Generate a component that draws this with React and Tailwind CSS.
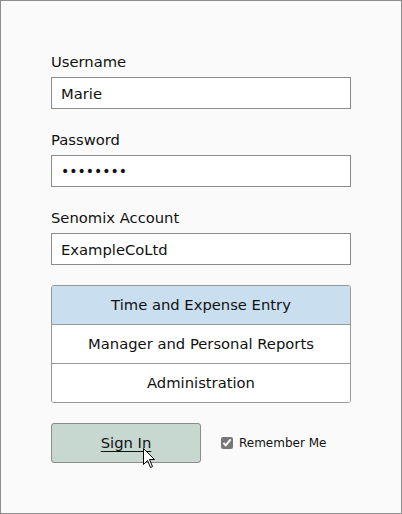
const font = { fontFamily: '"DejaVu Sans", Verdana, sans-serif' };

const Field = ({ label, children }) => (
  <div className="flex flex-col">
    <label className="text-[14.75px] leading-[20px] text-[#111] h-[20px] mb-[5px]">{label}</label>
    {children}
  </div>
);

const inputCls =
  "w-[300px] h-[32px] border border-[#8c8c8c] bg-white px-[9px] text-[14.75px] text-[#111] outline-none";

export default function App() {
  return (
    <div
      style={font}
      className="w-[402px] h-[514px] border border-[#8e8e8e] bg-[#fafafa] pl-[50px] pt-[51px] flex flex-col"
    >
      <div className="flex flex-col gap-[21px]">
        <Field label="Username">
          <input className={inputCls} defaultValue="Marie" readOnly />
        </Field>
        <Field label="Password">
          <input type="password" className={inputCls + " text-[14px]"} defaultValue="password" readOnly />
        </Field>
        <Field label="Senomix Account">
          <input className={inputCls} defaultValue="ExampleCoLtd" readOnly />
        </Field>
      </div>

      <div className="mt-[20px] w-[300px] border border-[#999] rounded-[3px] overflow-hidden flex flex-col text-[14.75px] text-[#111]">
        <div className="h-[39px] flex items-center justify-center bg-[#c9dff0] border-b border-[#999]">
          Time and Expense Entry
        </div>
        <div className="h-[39px] flex items-center justify-center bg-white border-b border-[#999]">
          Manager and Personal Reports
        </div>
        <div className="h-[38px] flex items-center justify-center bg-white">Administration</div>
      </div>

      <div className="mt-[20px] flex items-center">
        <div className="relative">
          <button className="w-[150px] h-[40px] bg-[#c6d8d0] border border-[#8c8c8c] rounded-[3px] text-[14.75px] text-[#111] underline underline-offset-[3px]">
            Sign In
          </button>
          <svg
            className="absolute left-[92px] top-[25px]"
            width="13"
            height="21"
            viewBox="0 0 13 21"
          >
            <path
              d="M0.5 0.5 L0.5 16.5 L4.5 12.5 L7.5 19.5 L9.5 18.5 L6.5 11.5 L11.5 11.5 Z"
              fill="#fff"
              stroke="#000"
              strokeWidth="1"
              strokeLinejoin="miter"
            />
          </svg>
        </div>
        <label className="ml-[20px] flex items-center gap-[6px] text-[12px] text-[#111]">
          <input type="checkbox" defaultChecked className="w-[12px] h-[12px] m-0 accent-[#777]" />
          Remember Me
        </label>
      </div>
    </div>
  );
}
